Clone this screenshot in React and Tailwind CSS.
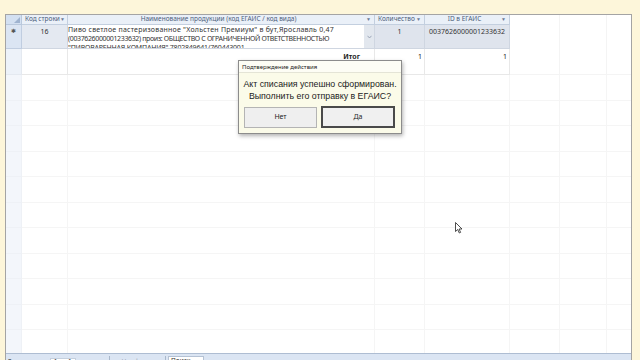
import React from "react";

const font = "font-['Noto_Sans',sans-serif]";

function Arrow() {
  return <span className="text-[5px] text-[#6a7a94] leading-none">▼</span>;
}

export default function App() {
  const emptyRows = [26, 25, 26, 25, 26, 25, 26, 25, 26, 25, 26];
  return (
    <div className={`relative w-[640px] h-[360px] overflow-hidden bg-[#fdf6da] pt-[14px] pl-[5px] pr-[8px] ${font}`}>
      <div className="h-[360px] border border-[#a4a4a4] bg-white flex flex-col">
        {/* header */}
        <div className="grid grid-cols-[16px_46px_307px_50px_85px_50px_47px_1fr] h-[10px] shrink-0 whitespace-nowrap">
          <div className="bg-[#d3e0f1] border-r border-b border-[#b9c8dc] flex items-end justify-end p-[1px]">
            <svg width="6" height="6" viewBox="0 0 6 6"><path d="M6 0 L6 6 L0 6 Z" fill="#9fb3cf" /></svg>
          </div>
          <div className="bg-[#eaf0f8] border-r border-b border-[#c3cfdf] flex items-center justify-between px-[3px] text-[6.5px] text-[#4d5d7a] leading-none overflow-hidden">
            <span>Код строки</span><Arrow />
          </div>
          <div className="bg-[#eaf0f8] border-r border-b border-[#c3cfdf] flex items-center justify-between px-[3px] text-[6.5px] text-[#4d5d7a] leading-none">
            <span className="flex-1 text-center">Наименование продукции (код ЕГАИС / код вида)</span><Arrow />
          </div>
          <div className="bg-[#eaf0f8] border-r border-b border-[#c3cfdf] flex items-center justify-between px-[3px] text-[6.5px] text-[#4d5d7a] leading-none">
            <span>Количество</span><Arrow />
          </div>
          <div className="bg-[#eaf0f8] border-r border-b border-[#c3cfdf] flex items-center justify-between px-[3px] text-[6.5px] text-[#4d5d7a] leading-none">
            <span className="flex-1 text-center">ID в ЕГАИС</span><Arrow />
          </div>
          <div className="border-r border-[#f4f4f4]" />
          <div className="border-r border-[#f4f4f4]" />
          <div />
        </div>
        {/* data row */}
        <div className="grid grid-cols-[16px_46px_307px_50px_85px_50px_47px_1fr] h-[24px] shrink-0 text-[7px] text-[#333] leading-[9px]">
          <div className="bg-[#dbe5f3] border-r border-b border-[#c0cde0] flex justify-center pt-[3px]">
            <span className="text-[6px] text-[#555] leading-none">✱</span>
          </div>
          <div className="bg-[#e4e9f1] border-r border-b border-[#cfd6e1] text-center pt-[2px]">16</div>
          <div className="bg-white border-r border-b border-[#cfd6e1] flex overflow-hidden">
            <div className="flex-1 pl-0 whitespace-nowrap overflow-hidden text-[7px]">
              <div className="tracking-[0.22px]">Пиво светлое пастеризованное "Хольстен Премиум" в бут,Ярославль 0,47</div>
              <div className="tracking-[-0.36px]">(0037626000001233632) произ: ОБЩЕСТВО С ОГРАНИЧЕННОЙ ОТВЕТСТВЕННОСТЬЮ</div>
              <div className="tracking-[-0.2px]">"ПИВОВАРЕННАЯ КОМПАНИЯ" 7802849641/760443001</div>
            </div>
            <div className="w-[10px] bg-[#e2e7ee] flex items-center justify-center">
              <svg width="5" height="4" viewBox="0 0 5 4"><path d="M0.5 0.8 L2.5 3 L4.5 0.8" stroke="#8a96aa" strokeWidth="0.8" fill="none" /></svg>
            </div>
          </div>
          <div className="bg-[#dfe4ed] border-r border-b border-[#cfd6e1] text-center pt-[2px]">1</div>
          <div className="bg-[#dfe4ed] border-r border-b border-[#cfd6e1] text-center pt-[2px]">0037626000001233632</div>
          <div className="border-r border-[#f4f4f4]" />
          <div className="border-r border-[#f4f4f4]" />
          <div />
        </div>
        {/* total row */}
        <div className="grid grid-cols-[16px_46px_307px_50px_85px_50px_47px_1fr] h-[26px] shrink-0 text-[7px] text-[#222] leading-[9px]">
          <div className="bg-[#edf2f9] border-r border-b border-[#e4e9f0]" />
          <div className="border-r border-b border-[#e8e8e8]" />
          <div className="border-r border-b border-[#e8e8e8] text-right pr-[14px] pt-[3px] font-bold">Итог</div>
          <div className="border-r border-b border-[#e8e8e8] text-right pr-[2px] pt-[3px]">1</div>
          <div className="border-r border-b border-[#e8e8e8] text-right pr-[2px] pt-[3px]">1</div>
          <div className="border-r border-b border-[#f4f4f4]" />
          <div className="border-r border-b border-[#f4f4f4]" />
          <div className="border-b border-[#f4f4f4]" />
        </div>
        {/* empty rows */}
        <div className="flex-1 overflow-hidden flex flex-col">
          {emptyRows.map((h, i) => (
            <div
              key={i}
              className={`grid grid-cols-[16px_46px_307px_50px_85px_50px_47px_1fr] shrink-0 ${h === 26 ? "h-[26px]" : "h-[25px]"}`}
            >
              <div className="bg-[#f3f6fb] border-r border-b border-[#eef1f6]" />
              <div className="border-r border-b border-[#f5f5f5]" />
              <div className="border-r border-b border-[#f5f5f5]" />
              <div className="border-r border-b border-[#f5f5f5]" />
              <div className="border-r border-b border-[#f5f5f5]" />
              <div className="border-r border-b border-[#f5f5f5]" />
              <div className="border-r border-b border-[#f5f5f5]" />
              <div className="border-b border-[#f5f5f5]" />
            </div>
          ))}
        </div>
        {/* status bar */}
        <div className="h-[20px] shrink-0 bg-[#dbe5f3] border-t border-[#aebdd2] flex items-start text-[6.5px] text-[#333] leading-none pt-[2px] whitespace-nowrap">
          <div className="flex items-center gap-[3px] pl-[2px] pr-[4px] border-r border-[#a9b8cc] h-[12px]">
            <span>Запись:</span>
            <span className="text-[5px]">⏮</span>
            <span className="text-[5px]">◀</span>
            <span className="bg-white px-[3px] border border-[#c5d0de]">1 из 1</span>
            <span className="text-[5px] ml-[4px]">▶</span>
            <span className="text-[5px]">⏭</span>
            <span className="text-[5px] text-[#999]">▶*</span>
          </div>
          <div className="flex items-center gap-[3px] px-[4px] border-r border-[#a9b8cc] h-[12px] text-[#9aa4b2]">
            <span className="text-[6px]">⛛</span>
            <span>Нет фильтра</span>
          </div>
          <div className="ml-[2px] bg-white border border-[#b5c2d4] w-[36px] h-[12px] px-[2px] flex items-start pt-[1px]">Поиск</div>
        </div>
      </div>

      {/* dialog */}
      <div className="absolute left-[238px] top-[60px] w-[164px] h-[74px] border border-[#8c8c8c] bg-[#fbfbe9] shadow-[1px_2px_4px_rgba(0,0,0,0.3)] flex flex-col">
        <div className="h-[12px] bg-[#fdfdf5] border-b border-[#e4e4d6] text-[6px] text-[#222] leading-none pl-[3px] pt-[3px] whitespace-nowrap">Подтверждение действия</div>
        <div className="text-center text-[8.8px] text-[#222] leading-[12px] pt-[5px] whitespace-nowrap font-['Liberation_Sans',sans-serif]">
          <div>Акт списания успешно сформирован.</div>
          <div>Выполнить его отправку в ЕГАИС?</div>
        </div>
        <div className="flex gap-[4px] px-[5px] pt-[5px]">
          <div className="w-[73px] h-[21px] bg-[#efefef] border border-[#b4b4b4] flex items-center justify-center text-[7px] text-[#222]">Нет</div>
          <div className="w-[74px] h-[22px] -mt-[1px] bg-[#f0f0f0] border-2 border-[#4a4a4a] flex items-center justify-center text-[7px] text-[#222]">Да</div>
        </div>
      </div>

      {/* cursor */}
      <svg className="absolute left-[455px] top-[222px]" width="8" height="12" viewBox="0 0 8 12">
        <path d="M0.5 0.5 L0.5 9.5 L2.7 7.5 L4.3 11 L5.6 10.4 L4.1 7 L7 7 Z" fill="#fff" stroke="#222" strokeWidth="0.8" strokeLinejoin="round" />
      </svg>
    </div>
  );
}
